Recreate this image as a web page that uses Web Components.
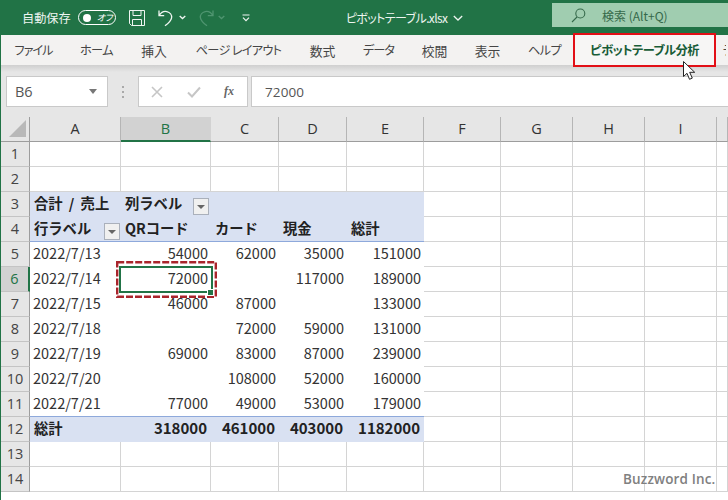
<!DOCTYPE html>
<html lang="ja"><head><meta charset="utf-8"><title>Excel</title>
<style>
html,body{margin:0;padding:0;width:728px;height:500px;overflow:hidden;background:#fff}
body{font-family:"Noto Sans CJK JP","Noto Sans",sans-serif;display:flex;flex-direction:column;border-left:1px solid #217346;box-sizing:border-box}
</style></head><body>
<excel-titlebar></excel-titlebar>
<excel-tabs>
  <excel-tab w="65" ls="-1">ファイル</excel-tab>
  <excel-tab w="61" ls="-.6">ホーム</excel-tab>
  <excel-tab w="54" fs="12.8">挿入</excel-tab>
  <excel-tab w="115" ls="-.7">ページ レイアウト</excel-tab>
  <excel-tab w="53" fs="12.8">数式</excel-tab>
  <excel-tab w="59" ls="-1">データ</excel-tab>
  <excel-tab w="53" fs="12.8">校閲</excel-tab>
  <excel-tab w="53" fs="12.8">表示</excel-tab>
  <excel-tab w="61" ls="-.6">ヘルプ</excel-tab>
  <excel-tab w="139" ls="-.5" active>ピボットテーブル分析</excel-tab>
  <excel-tab w="12" gap="9">デザイン</excel-tab>
</excel-tabs>
<excel-formula name="B6" value="72000"></excel-formula>
<excel-sheet></excel-sheet>
<mouse-cursor></mouse-cursor>
<script>
const el=(name,cls)=>customElements.define(name,cls);
class Base extends HTMLElement{
  html(h){this.attachShadow({mode:'open'}).innerHTML=h;}
}
el('excel-titlebar',class extends Base{connectedCallback(){this.html(`<style>
:host{display:flex;align-items:center;height:35px;flex:none;background:#217346;color:#eef5f0;font-size:12px;margin-left:-1px;font-feature-settings:"palt"}
.as{margin-left:22px;font-size:12.200px;white-space:nowrap;font-feature-settings:normal}
.pill{margin-left:7px;width:38px;height:15px;box-sizing:border-box;border:1.200px solid #fff;border-radius:8px;display:flex;align-items:center;gap:6px;padding-left:4px;font-size:9px;font-style:italic;color:#fff;flex:none;line-height:1}
.dot{width:8px;height:8px;background:#fff;border-radius:50%;flex:none}
svg{display:block;flex:none}
.title{margin-left:96px;width:100px;white-space:nowrap;font-size:12px;letter-spacing:-.6px}
.search{margin-left:auto;width:176px;height:24px;margin-top:-5px;background:#a0cdb0;color:#35694a;display:flex;align-items:center;font-size:12px;flex:none;box-sizing:border-box;padding-left:19px;font-feature-settings:normal}
.search span{margin-left:16px;white-space:nowrap}
</style>
<span class="as">自動保存</span>
<span class="pill"><i class="dot"></i><span>オフ</span></span>
<svg style="margin-left:13px" width="16" height="16" viewBox="0 0 16 16" fill="none" stroke="#f0f6f2" stroke-width="1"><path d="M.5.5h15v15H2.500l-2-2zM4 .5v5h8v-5M3.500 15.500v-6h9v6"/></svg>
<svg style="margin-left:13px" width="16" height="18" viewBox="0 0 16 18" fill="none" stroke="#f0f6f2" stroke-width="1.300"><path d="M1 1.500v5.200h5.200M1.300 6.500C3 3.500 6 2 8.800 2.600c3.200.7 5.200 3.300 4.800 6.200-.4 2.600-2.700 5-6.600 8"/></svg>
<svg style="margin-left:5px" width="7" height="5" viewBox="0 0 7 5" fill="none" stroke="#f0f6f2" stroke-width="1.300"><path d="M.7 1l2.800 2.600L6.300 1"/></svg>
<svg style="margin-left:12px" width="16" height="18" viewBox="0 0 16 18" fill="none" stroke="#4f9570" stroke-width="1.300"><path d="M15 1.500v5.200H9.800M14.700 6.500C13 3.500 10 2 7.200 2.600 4 3.300 2 5.900 2.400 8.800c.4 2.600 2.700 5 6.600 8"/></svg>
<svg style="margin-left:4px" width="7" height="5" viewBox="0 0 7 5" fill="none" stroke="#4f9570" stroke-width="1.300"><path d="M.7 1l2.800 2.600L6.300 1"/></svg>
<svg style="margin-left:17px" width="8" height="8" viewBox="0 0 8 8" fill="none" stroke="#f0f6f2" stroke-width="1.200"><path d="M.5 1h7M1 3.700l3 3 3-3"/></svg>
<span class="title">ピボットテーブル.xlsx</span>
<svg style="margin-left:7px" width="10" height="6" viewBox="0 0 10 6" fill="none" stroke="#eef5f0" stroke-width="1.300"><path d="M.8 1L5 5l4.200-4"/></svg>
<div class="search"><svg width="15" height="15" viewBox="0 0 15 15" fill="none" stroke="#35694a" stroke-width="1.100"><circle cx="9.300" cy="5.500" r="4.500"/><path d="M6 9L1 14"/></svg><span>検索 (Alt+Q)</span></div>`);}});

el('excel-tabs',class extends Base{connectedCallback(){this.html(`<style>
:host{display:flex;height:30px;flex:none;background:#f3f2f1;position:relative;z-index:2;overflow:visible;width:727px;white-space:nowrap;font-feature-settings:"palt"}
</style><slot></slot>`);}});

el('excel-tab',class extends Base{connectedCallback(){
 const w=this.getAttribute('w'),a=this.hasAttribute('active'),g=this.getAttribute('gap')||0;
 const ls=this.getAttribute('ls')||0,fs=this.getAttribute('fs')||12.2;
 this.html(`<style>
:host{display:flex;flex:none;width:${w}px;height:30px;box-sizing:border-box;align-items:center;justify-content:center;font-size:${fs}px;letter-spacing:${ls}px;color:#454545;position:relative;${g?`justify-content:flex-start;padding-left:${g}px;overflow:hidden;`:''}}
${a?`:host{background:#f7f6f5;color:#185c37;font-weight:700}
.box{position:absolute;left:-2px;right:-2px;top:-2px;bottom:-2px;border:2px solid #e20f16;pointer-events:none}`:''}
</style><slot></slot>${a?'<i class="box"></i>':''}`);}});

el('excel-formula',class extends Base{connectedCallback(){
 this.html(`<style>
:host{display:flex;flex:none;height:52px;box-sizing:border-box;background:linear-gradient(#cfcfcf 0,#e6e6e6 7px);padding:11px 0 10px 5px;color:#555;font-family:"Open Sans","Noto Sans",sans-serif}
.box{background:#fff;border:1px solid #c9c9c9;box-sizing:border-box;height:31px;flex:none;display:flex;align-items:center}
.name{width:102px;padding:0 9px 0 8px;font-size:14.500px;justify-content:space-between}
.dots{width:30px;display:flex;flex-direction:column;align-items:center;justify-content:center;gap:3px;flex:none}
.dots i{width:2px;height:2px;background:#a9a9a9}
.fn{width:110px;justify-content:space-between;padding:0 13px 0 12px}
.fx{font:italic 700 12px "Liberation Serif",serif;color:#666}
.val{flex:1;margin-left:3px;padding-left:13px;font-size:13.500px;border-right:0;letter-spacing:.1px}
</style>
<div class="box name"><span>${this.getAttribute('name')}</span><svg width="9" height="5" viewBox="0 0 9 5"><path d="M0 0h8L4 5z" fill="#777"/></svg></div>
<div class="dots"><i></i><i></i><i></i></div>
<div class="box fn">
<svg width="12" height="12" viewBox="0 0 12 12" fill="none" stroke="#c6c6c6" stroke-width="1.600"><path d="M1 1l10 10M11 1L1 11"/></svg>
<svg width="14" height="12" viewBox="0 0 14 12" fill="none" stroke="#c6c6c6" stroke-width="2"><path d="M1 6.500l4 4L13 1.500"/></svg>
<span class="fx">fx</span></div>
<div class="box val">${this.getAttribute('value')}</div>`);}});

const cols=[91,90,68,68,77,77,72,72,72,11];
const names='ABCDEFGHI'.split('').concat('');
const rows=[
 [],[],
 [{t:'合計 / 売上',b:1},{t:'列ラベル',b:1,f:1}],
 [{t:'行ラベル',b:1,f:2},{t:'QRコード',b:1},{t:'カード',b:1},{t:'現金',b:1},{t:'総計',b:1}],
 ['2022/7/13',54000,62000,35000,151000],
 ['2022/7/14',72000,'',117000,189000],
 ['2022/7/15',46000,87000,'',133000],
 ['2022/7/18','',72000,59000,131000],
 ['2022/7/19',69000,83000,87000,239000],
 ['2022/7/20','',108000,52000,160000],
 ['2022/7/21',77000,49000,53000,179000],
 [{t:'総計',b:1},318000,461000,403000,1182000],
 [],[]
];
el('excel-sheet',class extends Base{connectedCallback(){
 let h='<div class="corner"><svg width="18" height="17" viewBox="0 0 18 17"><path d="M17 0v17H0z" fill="#b8b8b8"/></svg></div>';
 names.forEach((n,i)=>h+=`<div class="ch${n==='B'?' sel':''}">${n}</div>`);
 rows.forEach((r,ri)=>{
  const num=ri+1;
  h+=`<div class="rh${num===6?' sel':''}">${num}</div>`;
  for(let c=0;c<10;c++){
   const pv=num>=3&&num<=12&&c<5, hd=num===3||num===4||num===12;
   let cl='c';
   if(pv)cl+=' pv';
   if(pv&&hd)cl+=' blue';
   if(pv&&(num===4||num===11))cl+=' ul';
   if(num===12&&pv)cl+=' tot';
   let v=r[c],inner='';
   if(v!==undefined&&v!==''){
    if(typeof v==='object'){
      cl+=' b';
      inner=`<span>${v.t}</span>`;
      if(v.f)inner+=`<filter-button style="right:${v.f===1?2:1}px"></filter-button>`;
    } else if(typeof v==='number'){
      cl+=' n'+(num===12?' b':'');
      inner=`<span>${v}</span>`;
    } else inner=`<span>${v}</span>`;
   }
   h+=`<div class="${cl}">${inner}</div>`;
  }
 });
 h+=`<svg class="dash" width="101" height="37" viewBox="0 0 101 37" fill="none"><rect x="1.200" y="1.200" width="98.600" height="34.600" stroke="#a9252c" stroke-width="2.400" stroke-dasharray="7 2"/></svg>
 <div class="cur"></div><div class="handle"></div>
 <div class="mark">Buzzword Inc.</div>`;
 this.html(`<style>
:host{display:grid;flex:1;position:relative;overflow:hidden;
 grid-template-columns:29px ${cols.map(c=>c+'px').join(' ')};grid-auto-rows:25px;grid-template-rows:25px;font-size:14.500px;color:#333;
 font-family:"Noto Sans CJK JP","Noto Sans",sans-serif}
.corner{background:#e6e6e6;border-right:1px solid #9d9d9d;border-bottom:1px solid #9d9d9d;box-sizing:border-box;display:flex;padding:3px 0 0 8px}
.ch{background:#e6e6e6;border-right:1px solid #b5b5b5;border-bottom:1px solid #9d9d9d;box-sizing:border-box;display:flex;align-items:center;justify-content:center;font:14.500px "Open Sans",sans-serif;color:#333;padding-bottom:1px}
.ch.sel{background:#d2d2d2;color:#217346;border-bottom:2px solid #217346;border-right-color:#d2d2d2;padding-bottom:0}
.rh{background:#e6e6e6;border-right:1px solid #9d9d9d;border-bottom:1px solid #c4c4c4;box-sizing:border-box;display:flex;align-items:center;justify-content:center;font:14.500px "Open Sans",sans-serif;color:#444;padding-bottom:1px}
.rh.sel{background:#d2d2d2;color:#217346;border-right:2px solid #217346}
.c{border-right:1px solid #d4d4d4;border-bottom:1px solid #d4d4d4;box-sizing:border-box;display:flex;align-items:center;padding:0 2px 3px 3px;white-space:nowrap;position:relative;min-width:0}
.c.pv{border-right:0;border-bottom-color:transparent;padding-right:3px}
.c.blue{background:#d9e1f2}
.c.ul{border-bottom:1px solid #8ea9db}
.c.n{justify-content:flex-end}
.c.b{font-weight:700;color:#222;font-size:14.300px;padding-left:4px;word-spacing:3px}
.c.tot.n{padding-right:4px;font-size:15px}
filter-button{position:absolute;top:6px}
.cur{position:absolute;left:118px;top:149px;width:94px;height:27px;box-sizing:border-box;border:2px solid #217346}
.handle{position:absolute;left:206px;top:172px;background:#217346;border:1px solid #fff;box-sizing:content-box;width:5px;height:5px}
.dash{position:absolute;left:115px;top:144px}
.mark{position:absolute;left:622px;top:353px;font:600 13.500px "Open Sans",sans-serif;color:#808080;white-space:nowrap;letter-spacing:.15px}
</style>${h}`);
}});

el('filter-button',class extends Base{connectedCallback(){this.html(`<style>
:host{display:flex;width:16px;height:17px;box-sizing:border-box;background:#f0f0f0;border:1px solid #aab0bb;align-items:center;justify-content:center}
</style><svg width="8" height="4" viewBox="0 0 8 4"><path d="M0 0h8L4 4z" fill="#666"/></svg>`);}});

el('mouse-cursor',class extends Base{connectedCallback(){this.html(`<style>
:host{position:absolute;left:683px;top:61px;display:block;z-index:5;width:14px;height:20px}
svg{display:block}
</style><svg width="14" height="20" viewBox="0 0 14 20"><path d="M.5.5v15l3.500-3.200 2.500 6 2.800-1.200-2.600-5.800h5z" fill="#fff" stroke="#222" stroke-width="1"/></svg>`);}});
</script>
</body></html>
